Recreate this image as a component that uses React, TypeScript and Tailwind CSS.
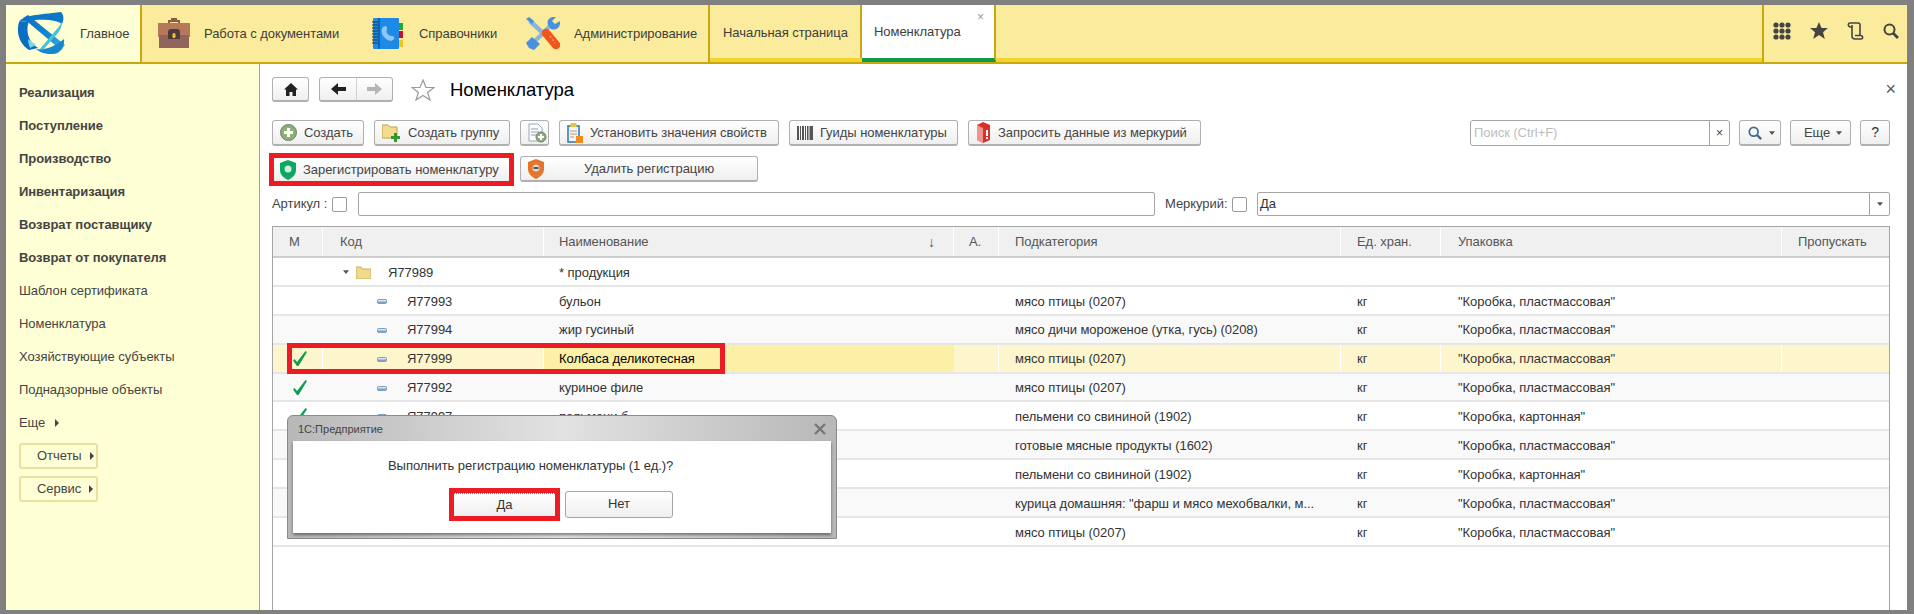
import type { ReactNode } from "react";

const Tri = ({ className = "" }: { className?: string }) => (
  <svg width="6" height="8" viewBox="0 0 6 8" className={`shrink-0 ${className}`}>
    <path d="M1 0l4 4-4 4z" fill="#444" />
  </svg>
);

const TriDown = ({ className = "" }: { className?: string }) => (
  <svg width="6" height="4" viewBox="0 0 8 5" className={`shrink-0 ${className}`}>
    <path d="M0 0h8L4 5z" fill="#555" />
  </svg>
);

const Logo = () => (
  <svg width="48" height="44" viewBox="0 0 48 44" className="shrink-0">
    <defs>
      <linearGradient id="lg1" x1="0" y1="0" x2="1" y2="1">
        <stop offset="0" stopColor="#0a6fc4" />
        <stop offset="0.6" stopColor="#1587cf" />
        <stop offset="1" stopColor="#3fc0d2" />
      </linearGradient>
    </defs>
    <path d="M2 10C6 3 20 3 44 0c3 3 3 8 1 12C38 7 22 7 12 9z" fill="#0e78c8" />
    <path d="M2 10C-1 20 2 32 12 38l9-2C12 30 8 20 12 9z" fill="#0a6fc4" />
    <path d="M6 6l5-3 37 30-4 5z" fill="url(#lg1)" />
    <path d="M47 27c1 9-5 16-13 15-6 0-12-2-15-5 8 1 17-1 28-10z" fill="#1587cf" />
    <path d="M45 9c0 4-1 8-4 12L26 38l-3-1 16-19c3-3 5-6 6-9z" fill="#45c2d6" />
    <path d="M11 27l8 6-6 3c-1-3-2-6-2-9z" fill="#7fd6e0" />
  </svg>
);

const Briefcase = () => (
  <svg width="32" height="31" viewBox="0 0 32 31" className="shrink-0">
    <path d="M10 6V2h3V0h6v2h3v4h-2V4h-8v2z" fill="#8c5a45" />
    <rect x="0" y="5" width="32" height="14" fill="#b5795a" />
    <rect x="1" y="17" width="30" height="13" fill="#91655c" />
    <path d="M10 21v-7c0-2 1-3 3-3h6c2 0 3 1 3 3v7z" fill="#4f3b3b" />
    <rect x="14.5" y="15" width="3" height="5" rx="1.5" fill="#f6c52c" />
  </svg>
);

const PhoneBook = () => (
  <svg width="34" height="33" viewBox="0 0 34 33" className="shrink-0">
    <rect x="28" y="6" width="4" height="7" fill="#1fa83c" />
    <rect x="28" y="14" width="4" height="7" fill="#c8102e" />
    <rect x="28" y="23" width="4" height="7" fill="#f2c318" />
    <rect x="2" y="1" width="26" height="31" rx="1" fill="#1d8ae8" />
    <rect x="7" y="1" width="2" height="31" fill="#0d62b3" />
    <path d="M1 5h6M1 8h6M1 11h6M1 14h6M1 17h6M1 20h6M1 23h6M1 26h6" stroke="#123a57" strokeWidth="1.2" />
    <path d="M12 10c2-2 4-1 4 1 0 2-1 3 0 5 1 2 3 3 5 3 2 0 3 2 2 3-2 3-7 2-10-2-3-3-3-8-1-10z" fill="#8cc6f5" />
  </svg>
);

const Tools = () => (
  <svg width="34" height="33" viewBox="0 0 34 33" className="shrink-0">
    <path d="M4 29L27 6" stroke="#8db5dc" strokeWidth="4.500" />
    <path d="M22 8c-2-5 2-9 8-8l-4 4 3 3 5-3c1 6-4 10-9 8z" fill="#4a90dc" />
    <path d="M0 26l6-6 8 7-6 6-5-2z" fill="#4a90dc" />
    <path d="M4 4l15 14" stroke="#8db5dc" strokeWidth="4.500" />
    <path d="M0 2l3-2 5 4-2 3z" fill="#4a90dc" />
    <path d="M20 16l10 12" stroke="#f0561a" strokeWidth="8.500" strokeLinecap="round" />
    <path d="M24 19l5 7" stroke="#ff9a5a" strokeWidth="1.400" strokeDasharray="2 2" />
  </svg>
);

const PlusCircle = () => (
  <svg width="17" height="17" viewBox="0 0 17 17" className="shrink-0">
    <circle cx="8.5" cy="8.5" r="8" fill="#8faf78" stroke="#6f7f68" />
    <path d="M4 8.500h9M8.500 4v9" stroke="#fff" strokeWidth="3" />
  </svg>
);

const FolderPlus = () => (
  <svg width="19" height="18" viewBox="0 0 19 18" className="shrink-0">
    <path d="M0 1h6l2 2h7v11H0z" fill="#f3dc8b" stroke="#bda34c" />
    <path d="M12 9h3v3h3v3h-3v3h-3v-3H9v-3h3z" fill="#2e9a2e" />
  </svg>
);

const DocPlus = () => (
  <svg width="19" height="20" viewBox="0 0 19 20" className="shrink-0">
    <path d="M1 1h9l4 4v13H1z" fill="#fff" stroke="#9aa7b5" />
    <path d="M3 6h7M3 9h8M3 12h5" stroke="#8f9ead" />
    <circle cx="13" cy="14" r="5" fill="#8faf78" stroke="#6f7f68" />
    <path d="M10 14h6M13 11v6" stroke="#fff" strokeWidth="2" />
  </svg>
);

const ClipList = () => (
  <svg width="16" height="20" viewBox="0 0 16 20" className="shrink-0">
    <rect x="1" y="3" width="11" height="16" fill="#eef4fa" stroke="#2d7fb8" strokeWidth="1.600" />
    <rect x="3.500" y="0" width="6" height="4" fill="#e8c53a" />
    <path d="M3 8h7M3 11h7M3 14h4" stroke="#c49a6a" />
    <rect x="9" y="13" width="7" height="7" fill="#f08a1d" />
  </svg>
);

const Barcode = () => (
  <svg width="16" height="14" viewBox="0 0 16 14" className="shrink-0">
    <path d="M0 0h2v14H0zM3 0h1v14H3zM5 0h2v14H5zM8 0h1v14H8zM10 0h1.500v14H10zM12.500 0H16v14h-3.500z" fill="#555" />
  </svg>
);

const RedCube = () => (
  <svg width="15" height="21" viewBox="0 0 15 21" className="shrink-0">
    <path d="M1 3l6-3 7 3v15l-7 3-6-3z" fill="#d9302b" />
    <path d="M1 3l6 3v15l-6-3z" fill="#f2938a" />
    <path d="M10 8h2v6h-2zM10 15h2v2h-2z" fill="#fff" />
  </svg>
);

const Shield = ({ color, children }: { color: string; children: ReactNode }) => (
  <svg width="16" height="20" viewBox="0 0 16 20" className="shrink-0">
    <path d="M8 0l8 3v7c0 5-4 8-8 10-4-2-8-5-8-10V3z" fill={color} />
    {children}
  </svg>
);

const Search = ({ color, size }: { color: string; size: number }) => (
  <svg width={size} height={size} viewBox="0 0 16 16" className="shrink-0">
    <circle cx="6.500" cy="6.500" r="5" fill="none" stroke={color} strokeWidth="2" />
    <path d="M10 10l5 5" stroke={color} strokeWidth="2.800" />
  </svg>
);

const Check = () => (
  <svg width="14" height="15" viewBox="0 0 14 15">
    <path d="M0 9.500l1.500-1.500 2.500 3L12.500 0l1.500 1-8.500 14h-1.500z" fill="#0f9d52" />
  </svg>
);

const ItemDash = () => (
  <svg width="10" height="5" viewBox="0 0 10 5" className="shrink-0">
    <rect width="10" height="5" rx="2" fill="#7f9fc0" />
    <rect x="1" y="1" width="8" height="1.500" fill="#dbe6f2" />
  </svg>
);

const Folder = () => (
  <svg width="15" height="13" viewBox="0 0 15 13" className="shrink-0">
    <path d="M0 1h5l1 2h9v10H0z" fill="#f1d98a" stroke="#c9b062" />
  </svg>
);

function Btn({
  w,
  icon,
  children,
}: {
  w: string;
  icon?: ReactNode;
  children?: ReactNode;
}) {
  return (
    <div
      className={`${w} h-[26px] flex items-center gap-[7px] pl-[7px] shrink-0 border border-[#b0b0b0] border-b-2 rounded-[3px] bg-gradient-to-b from-white to-[#efefef]`}
    >
      {icon}
      {children}
    </div>
  );
}

function Checkbox() {
  return <div className="w-[15px] h-[15px] shrink-0 bg-white border border-[#9a9a9a] rounded-[2px]" />;
}

function NavItem({ icon, label, w }: { icon: ReactNode; label: string; w: string }) {
  return (
    <div className={`${w} flex items-center gap-[14px] shrink-0`}>
      {icon}
      <span className="text-[#3d3d3d]">{label}</span>
    </div>
  );
}

const side = [
  ["Реализация", true],
  ["Поступление", true],
  ["Производство", true],
  ["Инвентаризация", true],
  ["Возврат поставщику", true],
  ["Возврат от покупателя", true],
  ["Шаблон сертификата", false],
  ["Номенклатура", false],
  ["Хозяйствующие субъекты", false],
  ["Поднадзорные объекты", false],
] as const;

const colW = ["w-[50px]", "w-[221px]", "w-[410px]", "w-[45px]", "w-[342px]", "w-[100px]", "w-[341px]", "w-[107px]"];

const KOR = '"Коробка, пластмассовая"';
const KART = '"Коробка, картонная"';

type Row = { check?: boolean; group?: boolean; code?: string; name?: string; sub: string; unit: string; pack: string; sel?: boolean };

// the rows behind the dialog only have the columns that can be read
const rows: Row[] = [
  { group: true, code: "Я77989", name: "* продукция", sub: "", unit: "", pack: "" },
  { code: "Я77993", name: "бульон", sub: "мясо птицы (0207)", unit: "кг", pack: KOR },
  { code: "Я77994", name: "жир гусиный", sub: "мясо дичи мороженое (утка, гусь) (0208)", unit: "кг", pack: KOR },
  { check: true, sel: true, code: "Я77999", name: "Колбаса деликотесная", sub: "мясо птицы (0207)", unit: "кг", pack: KOR },
  { check: true, code: "Я77992", name: "куриное филе", sub: "мясо птицы (0207)", unit: "кг", pack: KOR },
  { check: true, code: "Я77997", name: "пельмени б", sub: "пельмени со свининой (1902)", unit: "кг", pack: KART },
  { sub: "готовые мясные продукты (1602)", unit: "кг", pack: KOR },
  { sub: "пельмени со свининой (1902)", unit: "кг", pack: KART },
  { sub: 'курица домашняя: "фарш и мясо мехобвалки, м...', unit: "кг", pack: KOR },
  { sub: "мясо птицы (0207)", unit: "кг", pack: KOR },
];

function TableRow({ r, i }: { r: Row; i: number }) {
  const rowBg = r.sel ? "bg-[#fdf6cd]" : i % 2 === 0 && i > 0 ? "bg-[#f9f9f9]" : "bg-white";
  const sep = r.sel ? "border-r border-white" : "";
  return (
    <div className={`flex h-[28.9px] items-center border-b-2 border-[#e6e6e6] text-[#333] ${rowBg}`}>
      <div className={`${colW[0]} h-full flex items-center pl-[20px] ${sep}`}>{r.check && <Check />}</div>
      <div className={`${colW[1]} h-full flex items-center pt-[2px] ${sep} ${r.group ? "pl-[20px]" : "pl-[54px]"}`}>
        {r.group ? (
          <>
            <TriDown className="mr-[7px]" />
            <Folder />
            <span className="ml-[17px]">{r.code}</span>
          </>
        ) : (
          r.code && (
            <>
              <ItemDash />
              <span className="ml-[20px]">{r.code}</span>
            </>
          )
        )}
      </div>
      <div className={`${colW[2]} h-full flex items-center pt-[2px] pl-[15px] ${r.sel ? "bg-[#fcefa6] text-black" : ""}`}>{r.name}</div>
      <div className={`${colW[3]} h-full ${sep}`} />
      <div className={`${colW[4]} h-full flex items-center pt-[2px] pl-[16px] ${sep}`}>{r.sub}</div>
      <div className={`${colW[5]} h-full flex items-center pt-[2px] pl-[16px] ${sep}`}>{r.unit}</div>
      <div className={`${colW[6]} h-full flex items-center pt-[2px] pl-[17px] ${sep}`}>{r.pack}</div>
      <div className={`${colW[7]} h-full`} />
    </div>
  );
}

const heads: [string, string][] = [
  ["М", "pl-[16px]"],
  ["Код", "pl-[17px]"],
  ["Наименование", "pl-[15px]"],
  ["А.", "pl-[15px]"],
  ["Подкатегория", "pl-[16px]"],
  ["Ед. хран.", "pl-[16px]"],
  ["Упаковка", "pl-[17px]"],
  ["Пропускать", "pl-[16px]"],
];

export default function App() {
  return (
    <div className="relative w-[1914px] h-[614px] overflow-hidden whitespace-nowrap bg-[#808080] pt-[5px] pl-[6px] pr-[7px] pb-[4px] font-['Liberation_Sans',Arial,sans-serif] text-[13px] tracking-[-0.05px]">
      <div className="flex flex-col h-full">
        {/* Top panel */}
        <div className="h-[59px] shrink-0 flex bg-[#fbec9d] border-b-2 border-[#c8a80c]">
          <div className="w-[136px] shrink-0 flex items-center pl-[11px] gap-[15px] bg-[#ffffd5] border-r-2 border-[#c8a80c] text-[#3d3d3d]">
            <Logo />
            <span className="pt-[1px]">Главное</span>
          </div>
          <div className="flex pl-[16px] w-[568px] shrink-0 border-r-2 border-[#c8a80c]">
            <NavItem w="w-[213px]" icon={<Briefcase />} label="Работа с документами" />
            <NavItem w="w-[155px]" icon={<PhoneBook />} label="Справочники" />
            <NavItem w="w-[180px]" icon={<Tools />} label="Администрирование" />
          </div>
          <div className="flex-1 flex border-b-[4px] border-[#f3d32c]">
            <div className="w-[152px] shrink-0 flex items-center pl-[13px] pt-[3px] text-[#3d3d3d] border-r-2 border-[#c8a80c]">
              Начальная страница
            </div>
            <div className="relative w-[134px] shrink-0 -mb-[4px] flex items-center pl-[12px] pt-[1px] bg-white text-[#3d3d3d] border-r-2 border-[#c8a80c] border-b-[4px] border-b-[#0c9c48]">
              Номенклатура
              <span className="absolute right-[10px] top-[3px] text-[12px] text-[#9a9a9a]">×</span>
            </div>
            <div className="flex-1" />
          </div>
          <div className="w-[145px] shrink-0 flex items-center border-l-2 border-[#c8a80c] pl-[9px] gap-[19px] pb-[6px]">
            <svg width="18" height="18" viewBox="0 0 18 18" className="shrink-0">
              <g fill="#444">
                <circle cx="3" cy="3" r="2.600" /><circle cx="9" cy="3" r="2.600" /><circle cx="15" cy="3" r="2.600" />
                <circle cx="3" cy="9" r="2.600" /><circle cx="9" cy="9" r="2.600" /><circle cx="15" cy="9" r="2.600" />
                <circle cx="3" cy="15" r="2.600" /><circle cx="9" cy="15" r="2.600" /><circle cx="15" cy="15" r="2.600" />
              </g>
            </svg>
            <svg width="18" height="17" viewBox="0 0 18 17" className="shrink-0">
              <path d="M9 0l2.600 6H18l-5 4.200L14.800 17 9 13l-5.800 4L5 10.200 0 6h6.400z" fill="#444" />
            </svg>
            <svg width="17" height="18" viewBox="0 0 17 18" className="shrink-0">
              <path d="M3 1h8c1.500 0 2 1 2 2v11M3 1c-2 0-2.500 3 0 4h2M5 3v11c0 3 2 3 3 3h6c2 0 2.500-3 0-3.500H8" fill="none" stroke="#444" strokeWidth="1.600" />
            </svg>
            <Search color="#444" size={16} />
          </div>
        </div>

        <div className="flex flex-1 min-h-0">
          {/* Sidebar */}
          <div className="w-[254px] shrink-0 bg-[#ffffd5] border-r border-[#a8a87c] pl-[13px] pt-[12px] text-[#444]">
            {side.map(([label, bold]) => (
              <div key={label} className={`h-[33px] flex items-center ${bold ? "font-bold" : ""}`}>
                {label}
              </div>
            ))}
            <div className="h-[33px] flex items-center gap-[9px]">
              Еще <Tri />
            </div>
            <div className="flex flex-col gap-[7px] mt-[4px]">
              <div className="w-[79px] h-[26px] pl-[16px] gap-[7px] flex items-center border-2 border-[#ece0a0] rounded-[3px]">
                Отчеты <Tri />
              </div>
              <div className="w-[79px] h-[26px] pl-[16px] gap-[7px] flex items-center border-2 border-[#ece0a0] rounded-[3px]">
                Сервис <Tri />
              </div>
            </div>
          </div>

          {/* Form */}
          <div className="flex-1 min-w-0 flex flex-col bg-white pl-[12px] pr-[17px] pt-[13px] text-[#444]">
            <div className="flex items-center h-[25px] shrink-0">
              <div className="w-[37px] h-[25px] flex items-center justify-center border border-[#b0b0b0] border-b-2 rounded-[3px] bg-gradient-to-b from-white to-[#efefef]">
                <svg width="14" height="13" viewBox="0 0 14 13">
                  <path d="M7 0l7 6.500h-2V13H8.500V9h-3v4H2V6.500H0z" fill="#222" />
                </svg>
              </div>
              <div className="ml-[10px] w-[74px] h-[25px] flex border border-[#b0b0b0] border-b-2 rounded-[3px] bg-gradient-to-b from-white to-[#efefef]">
                <div className="w-[37px] flex items-center justify-center border-r border-[#d0d0d0]">
                  <svg width="15" height="12" viewBox="0 0 15 12"><path d="M7 0v4h8v4H7v4L0 6z" fill="#222" /></svg>
                </div>
                <div className="flex-1 flex items-center justify-center">
                  <svg width="15" height="12" viewBox="0 0 15 12"><path d="M8 0v4H0v4h8v4l7-6z" fill="#b5b5b5" /></svg>
                </div>
              </div>
              <svg width="24" height="22" viewBox="0 0 24 22" className="ml-[18px]">
                <path d="M12 1l3 7.500h8l-6.400 5 2.400 7.500-7-4.600L5 21l2.400-7.500L1 8.500h8z" fill="none" stroke="#9a9a9a" strokeWidth="1.200" />
              </svg>
              <span className="ml-[15px] text-[18.500px] tracking-normal text-black">Номенклатура</span>
              <span className="ml-auto -mr-[6px] text-[18px] text-[#555]">×</span>
            </div>

            <div className="flex gap-[10px] mt-[18px] shrink-0">
              <Btn w="w-[92px]" icon={<PlusCircle />}>Создать</Btn>
              <Btn w="w-[136px]" icon={<FolderPlus />}>Создать группу</Btn>
              <Btn w="w-[29px]" icon={<DocPlus />} />
              <Btn w="w-[220px]" icon={<ClipList />}>Установить значения свойств</Btn>
              <Btn w="w-[169px]" icon={<Barcode />}>Гуиды номенклатуры</Btn>
              <Btn w="w-[233px]" icon={<RedCube />}>Запросить данные из меркурий</Btn>
              <div className="ml-auto flex gap-[9px]">
                <div className="w-[260px] h-[26px] flex border border-[#a5a5a5] rounded-[3px]">
                  <span className="flex-1 pl-[3px] flex items-center text-[#bdbdbd]">Поиск (Ctrl+F)</span>
                  <span className="w-[20px] flex items-center justify-center border-l border-[#a5a5a5] text-[12px]">×</span>
                </div>
                <div className="w-[42px] h-[26px] flex items-center pl-[8px] gap-[7px] border border-[#b0b0b0] border-b-2 rounded-[3px] bg-gradient-to-b from-white to-[#efefef]">
                  <Search color="#3e6a9a" size={14} />
                  <TriDown />
                </div>
                <div className="w-[61px] h-[26px] flex items-center pl-[13px] gap-[6px] border border-[#b0b0b0] border-b-2 rounded-[3px] bg-gradient-to-b from-white to-[#efefef]">
                  Еще <TriDown />
                </div>
                <div className="w-[30px] h-[26px] flex items-center justify-center text-[14px] text-[#333] border border-[#b0b0b0] border-b-2 rounded-[3px] bg-gradient-to-b from-white to-[#efefef]">
                  ?
                </div>
              </div>
            </div>

            <div className="flex mt-[10px] h-[26px] shrink-0">
              <div className="-ml-[3px] -mt-[3px] w-[245px] h-[33px] shrink-0 flex items-center gap-[7px] pl-[6px] border-[5px] border-[#ed1c24] bg-gradient-to-b from-white to-[#efefef]">
                <Shield color="#0ba862">
                  <circle cx="8" cy="9" r="3.500" fill="#cfeee0" />
                </Shield>
                <span>Зарегистрировать номенклатуру</span>
              </div>
              <div className="ml-[6px] w-[238px] h-[26px] flex items-center pl-[7px] border border-[#b0b0b0] border-b-2 rounded-[3px] bg-gradient-to-b from-white to-[#efefef]">
                <Shield color="#e5752a">
                  <circle cx="8" cy="9" r="3.500" fill="#d8d8d8" />
                  <rect x="5.500" y="8" width="5" height="2" fill="#555" />
                </Shield>
                <span className="ml-[40px]">Удалить регистрацию</span>
              </div>
            </div>

            <div className="flex items-center mt-[10px] h-[24px] shrink-0">
              <span className="w-[60px] shrink-0">Артикул :</span>
              <Checkbox />
              <div className="ml-[11px] w-[797px] h-[24px] shrink-0 border border-[#a5a5a5] rounded-[2px]" />
              <span className="ml-[10px] w-[67px] shrink-0">Меркурий:</span>
              <Checkbox />
              <div className="ml-[10px] flex-1 h-[24px] flex border border-[#a5a5a5] rounded-[2px]">
                <span className="flex-1 pl-[2px] flex items-center text-[#333]">Да</span>
                <span className="w-[20px] flex items-center justify-center border-l border-[#a5a5a5]">
                  <TriDown />
                </span>
              </div>
            </div>

            {/* Table */}
            <div className="mt-[10px] flex-1 min-h-0 border border-b-0 border-[#a5a5a5] overflow-hidden">
              <div className="flex h-[31px] bg-[#f0f0f0] border-b-2 border-[#cdcdcd] text-[#555]">
                {heads.map(([h, pad], i) => (
                  <div key={h} className={`${colW[i]} ${pad} relative flex items-center pt-[1px] ${i < 7 ? "border-r border-white" : ""}`}>
                    {h}
                    {i === 2 && <span className="absolute right-[18px] top-[5px] text-[14px]">↓</span>}
                  </div>
                ))}
              </div>
              {rows.map((r, i) => (
                <TableRow key={i} r={r} i={i} />
              ))}
            </div>
          </div>
        </div>
      </div>

      {/* Red frame around selected row */}
      <div className="absolute left-[287px] top-[343px] w-[438px] h-[31px] border-[5px] border-[#ed1c24] pointer-events-none" />

      {/* Confirm dialog */}
      <div className="absolute left-[287px] top-[415px] w-[550px] h-[124px] flex flex-col px-[5px] pb-[5px] border border-[#8a8a8a] rounded-t-[6px] bg-gradient-to-r from-[#b8b8b8] via-[#e2e2e2] to-[#b8b8b8]">
        <div className="h-[25px] shrink-0 flex items-center text-[#444] pl-[5px] pt-[1px] text-[11px] tracking-normal">
          <span>1С:Предприятие</span>
          <svg width="12" height="12" viewBox="0 0 12 12" className="ml-auto mr-[5px]">
            <path d="M1 1l10 10M11 1L1 11" stroke="#777" strokeWidth="2.400" />
          </svg>
        </div>
        <div className="flex-1 bg-white shadow-[0_2px_3px_rgba(0,0,0,0.45)] flex flex-col items-start pt-[15px] text-[#333]">
          <span className="ml-[95px]">Выполнить регистрацию номенклатуры (1 ед.)?</span>
          <div className="flex items-center gap-[5px] mt-[12px] ml-[156px]">
            <div className="w-[111px] h-[33px] border-[5px] border-[#ed1c24] bg-gradient-to-b from-white to-[#efefef]">
              <div className="h-full flex items-center justify-center border-t border-dotted border-[#777]">Да</div>
            </div>
            <div className="w-[108px] h-[27px] flex items-center justify-center border border-[#a5a5a5] rounded-[3px] bg-gradient-to-b from-white to-[#efefef]">
              Нет
            </div>
          </div>
        </div>
      </div>
    </div>
  );
}
